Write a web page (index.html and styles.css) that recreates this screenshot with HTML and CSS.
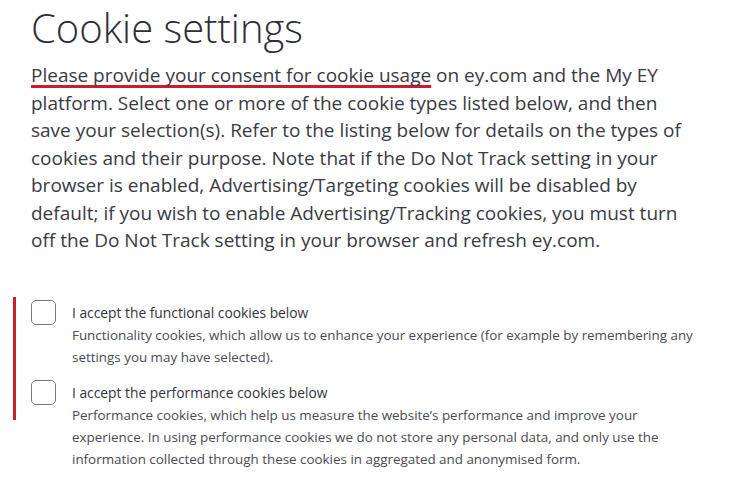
FILE: index.html
```html
<!DOCTYPE html>
<html lang="en">
<head>
<meta charset="utf-8">
<title>Cookie settings</title>
<link rel="stylesheet" href="styles.css">
</head>
<body>
<main class="page">
  <h1 class="title">Cookie settings</h1>
  <p class="intro"><span class="mark">Please provide your consent for cookie usage</span> on ey.com and the My EY platform. Select one or more of the cookie types listed below, and then save your selection(s). Refer to the listing below for details on the types of cookies and their purpose. Note that if the Do Not Track setting in your browser is enabled, Advertising/Targeting cookies will be disabled by default; if you wish to enable Advertising/Tracking cookies, you must turn off the Do Not Track setting in your browser and refresh ey.com.</p>
  <div class="options">
    <label class="option">
      <input type="checkbox" class="check">
      <span class="box"></span>
      <span class="text">
        <span class="opt-title">I accept the functional cookies below</span>
        <span class="opt-desc">Functionality cookies, which allow us to enhance your experience (for example by remembering any settings you may have selected).</span>
      </span>
    </label>
    <label class="option">
      <input type="checkbox" class="check">
      <span class="box"></span>
      <span class="text">
        <span class="opt-title">I accept the performance cookies below</span>
        <span class="opt-desc">Performance cookies, which help us measure the website’s performance and improve your experience. In using performance cookies we do not store any personal data, and only use the information collected through these cookies in aggregated and anonymised form.</span>
      </span>
    </label>
  </div>
</main>
</body>
</html>
```
FILE: styles.css
```css
html, body {
  margin: 0;
  padding: 0;
  background: #ffffff;
}

body {
  font-family: "Open Sans", "Liberation Sans", sans-serif;
  color: #2e2e38;
}

.page {
  padding: 0 0 0 31px;
  width: 670px;
}

.title {
  margin: 0;
  padding-top: 4px;
  font-size: 40px;
  line-height: 48px;
  font-weight: 300;
  color: #2e2e38;
  letter-spacing: 0;
}

.intro {
  margin: 10px 0 0;
  font-size: 19px;
  line-height: 27.5px;
  font-weight: 400;
  color: #3a3a44;
}

.mark {
  text-decoration: underline;
  text-decoration-color: #c8202a;
  text-decoration-thickness: 2.5px;
  text-underline-offset: 3px;
  text-decoration-skip-ink: none;
}

.options {
  position: relative;
  margin-top: 42px;
  display: flex;
  flex-direction: column;
  gap: 9.5px;
}

.options::before {
  content: "";
  position: absolute;
  left: -18px;
  top: 0;
  width: 3px;
  height: 123px;
  background: #c8202a;
}

.option {
  display: flex;
  align-items: flex-start;
  gap: 16px;
}

.check {
  position: absolute;
  opacity: 0;
  width: 0;
  height: 0;
  margin: 0;
}

.box {
  flex: none;
  width: 23px;
  height: 23px;
  border: 1px solid #7a7a80;
  border-radius: 5px;
  margin-top: 3px;
  box-sizing: content-box;
}

.text {
  display: flex;
  flex-direction: column;
  margin-top: 4px;
}

.opt-title {
  font-size: 13.8px;
  line-height: 23px;
  font-weight: 500;
  color: #33333d;
}

.opt-desc {
  font-size: 13.4px;
  line-height: 22px;
  color: #4a4a52;
}
```
